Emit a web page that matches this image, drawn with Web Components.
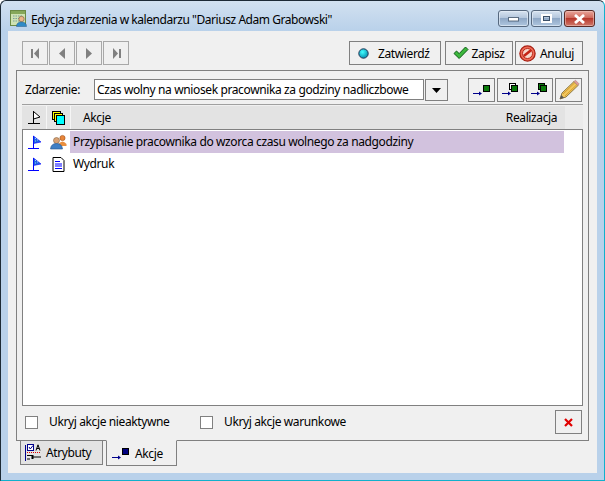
<!DOCTYPE html>
<html><head><meta charset="utf-8"><style>html,body{margin:0;padding:0;background:#fff;}</style></head><body>
<edit-window></edit-window>
<script>
const ICONS={
first:'<svg width="9" height="11" viewBox="0 0 9 11"><rect x="0" y="1" width="2" height="9" fill="#808080"/><path d="M8 0V11L3 5.5Z" fill="#808080"/></svg>',
prev:'<svg width="6" height="11" viewBox="0 0 6 11"><path d="M6 0V11L0 5.5Z" fill="#808080"/></svg>',
next:'<svg width="6" height="11" viewBox="0 0 6 11"><path d="M0 0V11L6 5.5Z" fill="#808080"/></svg>',
last:'<svg width="9" height="11" viewBox="0 0 9 11"><rect x="7" y="1" width="2" height="9" fill="#808080"/><path d="M1 0V11L6 5.5Z" fill="#808080"/></svg>',
dot:'<svg width="11" height="11" viewBox="0 0 11 11"><defs><radialGradient id="d" cx=".4" cy=".35" r=".7"><stop offset="0" stop-color="#4ff"/><stop offset="1" stop-color="#08a"/></radialGradient></defs><circle cx="5.5" cy="5.5" r="4.7" fill="url(#d)" stroke="#235" stroke-width="1"/></svg>',
check:'<svg width="16" height="14" viewBox="0 0 16 14"><path d="M1 7.5L3.5 5L6.2 7.6L12.5 1L15 3.5L6.2 12.5Z" fill="#3db83d" stroke="#0d5c16" stroke-width="1"/></svg>',
stop:'<svg width="17" height="17" viewBox="0 0 17 17"><circle cx="8.5" cy="8.5" r="7.6" fill="#ee6a55" stroke="#a81e12" stroke-width="1.3"/><circle cx="8.5" cy="8.5" r="5" fill="#f7d8cc" stroke="#b92a1c" stroke-width="1"/><path d="M4.8 11L12 5.2" stroke="#c52416" stroke-width="2.6"/></svg>',
pencil:'<svg width="22" height="22" viewBox="0 0 22 22"><path d="M2 20L4 14L16 2.5L20 6.5L8 18Z" fill="#f2c75c" stroke="#8f7a44" stroke-width="1"/><path d="M5 15L17 3.5M7 17L19 5.5" stroke="#d69c2e" stroke-width="1"/><path d="M2 20L3.3 16L6 18.8Z" fill="#555"/><path d="M16 2.5L17.5 1.2L21 4.8L20 6.5Z" fill="#e79a9a" stroke="#a88" stroke-width=".7"/></svg>',
flagK:'<svg width="15" height="15" viewBox="0 0 15 15"><path d="M6.5 1V13M1 13.500H13" stroke="#000" stroke-width="1" fill="none"/><path d="M6.500 1.500L13 7L6.500 9Z" fill="#fff" stroke="#000" stroke-width="1"/></svg>',
flagB:'<svg width="14" height="15" viewBox="0 0 14 15"><path d="M5.5 1V13M0 13.500H11" stroke="#00f" stroke-width="1" fill="none"/><path d="M5.5 1L13 7L5.500 8.500Z" fill="#1c63e0" stroke="#00f" stroke-width=".6"/><path d="M7 3.5h1M9 5h1M7 6h1" stroke="#9cf" stroke-width="1"/></svg>',
layers:'<svg width="13" height="14" viewBox="0 0 13 14"><rect x=".5" y=".5" width="8" height="8" fill="#ff0" stroke="#000"/><rect x="2.5" y="2.5" width="8" height="8" fill="#ff0" stroke="#000"/><rect x="4.5" y="4.5" width="8" height="9" fill="#0ff" stroke="#000"/></svg>',
people:'<svg width="17" height="16" viewBox="0 0 17 16"><circle cx="12.5" cy="4" r="2.6" fill="#e8863a" stroke="#a04f14" stroke-width=".6"/><path d="M8.5 10Q12.5 5 16.5 10V12H8.5Z" fill="#e98f3f"/><circle cx="6.5" cy="6.5" r="3" fill="#d9a172" stroke="#84623f" stroke-width=".6"/><path d="M.5 15Q1 9.5 6.5 9.5T12.5 15Z" fill="#3f7fc4" stroke="#27568c" stroke-width=".6"/></svg>',
doc:'<svg width="13" height="15" viewBox="0 0 13 15"><path d="M1 .5H9L12 3.5V14.5H1Z" fill="#fff" stroke="#000" stroke-width="1"/><path d="M3 4.5H8M3 7H10M3 9H10M3 11.5H10" stroke="#00f" stroke-width="1"/></svg>',
attr:'<svg width="18" height="18" viewBox="0 0 18 18"><rect x="3.5" y=".5" width="6" height="6" fill="#fff" stroke="#00008b"/><path d="M5 3L6.3 5L9 1.5" stroke="#00008b" fill="none"/><path d="M12 6.5L14 .8L16 6.5M12.8 4.5H15.2" stroke="#000" fill="none"/><path d="M3 8.5H17" stroke="#d00" stroke-dasharray="1 1"/><path d="M1.5 1V17" stroke="#00008b"/><path d="M3 11.5H8M3 15H6" stroke="#000"/><path d="M8 13H17" stroke="#000"/><rect x="7.5" y="11" width="2" height="4" fill="#000"/></svg>',
calIcon:'<svg width="17" height="17" viewBox="0 0 17 17"><rect x=".5" y=".5" width="15" height="15" fill="#cfe2b2" stroke="#6b8a45"/><rect x="1" y="1" width="14" height="3" fill="#86a85a"/><path d="M3 6h10M3 8.500h10M3 11h10" stroke="#7a9f9f" stroke-dasharray="1.500 1"/><circle cx="11.500" cy="9" r="2.700" fill="#eab589" stroke="#7a5632" stroke-width=".6"/><path d="M6.500 16.500Q6.500 12 11.500 12T16.500 16.500Z" fill="#2f8ac6" stroke="#2a5a88" stroke-width=".5"/></svg>'
};
const ARROW='<path d="M0 10.500H7" stroke="#00008b" fill="none"/><path d="M6 8.500L9 10.500L6 12.500Z" fill="#00008b"/>';
const sq=(fill,back,backFill)=>`<svg width="18" height="14" viewBox="0 0 18 14">${ARROW}${back?`<rect x="7.500" y=".5" width="6" height="6" fill="${backFill}" stroke="#000"/>`:''}<rect x="${back?9.5:10.5}" y="2.500" width="6" height="6" fill="${fill}" stroke="#000"/></svg>`;
function el(name,html){customElements.define(name,class extends HTMLElement{constructor(){super();this.attachShadow({mode:'open'}).innerHTML=html;}});}
el('ui-btn',`<style>:host{display:inline-flex;box-sizing:border-box;height:24px;border:1px solid #808080;align-items:center;justify-content:center;background:#f0f0f0;color:#000;flex:none}:host([dim]){border-color:#a8a8a8}</style><slot></slot>`);
el('title-bar',`<style>:host{display:flex;height:30px;box-sizing:border-box;padding:9px 9px 0 9px;gap:4px;font-size:12px;letter-spacing:-.45px;color:#000}
.t{flex:1;line-height:20px}.ctl{display:flex;gap:2px;height:17px}
.c{width:31px;height:17px;box-sizing:border-box;border:1px solid #56687e;border-radius:3px;background:linear-gradient(#d7e3f0,#b4c7dd 45%,#8fa8c6 50%,#aec6df);display:flex;align-items:center;justify-content:center;box-shadow:inset 0 0 0 1px #e6eef7aa}
.x{background:linear-gradient(#e9a59a,#cf6a5d 45%,#b8382c 50%,#d0796b);border-color:#5a2a25;box-shadow:inset 0 0 0 1px #efc4bc99}</style>
<span style="display:flex">${ICONS.calIcon}</span><span class="t"><slot></slot></span>
<div class="ctl"><div class="c"><svg width="11" height="6"><rect x=".5" y="1.500" width="10" height="3.500" fill="#fff" stroke="#3c5068" stroke-opacity=".8"/></svg></div><div class="c"><svg width="11" height="9"><rect x="1" y="1" width="9" height="7" fill="none" stroke="#fff" stroke-width="2"/><rect x="2.500" y="2.500" width="6" height="4" fill="none" stroke="#3c5068"/></svg></div><div class="c x"><svg width="13" height="10"><path d="M2 1L11 9M11 1L2 9" stroke="#fff" stroke-width="2.800"/></svg></div></div>`);
el('nav-bar',`<style>:host{display:flex;height:24px;margin:10px 14px 0 14px;gap:1px}.s{flex:1}
ui-btn.n{width:26px}</style>
<ui-btn dim class="n">${ICONS.first}</ui-btn><ui-btn dim class="n">${ICONS.prev}</ui-btn><ui-btn dim class="n">${ICONS.next}</ui-btn><ui-btn dim class="n">${ICONS.last}</ui-btn><span class="s"></span>
<ui-btn style="width:92px;gap:9px;margin-right:3px;justify-content:flex-start;padding-left:8px;box-sizing:border-box">${ICONS.dot}<span>Zatwierdź</span></ui-btn><ui-btn style="width:68px;gap:2px;margin-right:1px">${ICONS.check}<span>Zapisz</span></ui-btn><ui-btn style="width:68px;gap:4px;padding-right:5px">${ICONS.stop}<span>Anuluj</span></ui-btn>`);
el('event-row',`<style>:host{display:flex;align-items:flex-start;height:24px;margin:7px 6px 0 8px}
.l{width:69px;line-height:21px;margin-top:1px}.in{width:330px;height:21px;margin-top:1px;box-sizing:border-box;border:1px solid #808080;background:#fff;display:flex;align-items:center;padding:0 0 1px 2px;white-space:nowrap}
ui-btn{width:27px;margin-left:2px}ui-btn.dd{width:23px;height:22px;margin:1px 20px 0 1px}ui-btn.f{margin-left:0}</style>
<span class="l">Zdarzenie:</span><div class="in">Czas wolny na wniosek pracownika za godziny nadliczbowe</div>
<ui-btn class="dd"><svg width="9" height="5"><path d="M0 0H9L4.500 5Z" fill="#000"/></svg></ui-btn>
<ui-btn class="f">${sq('#0a7a0a')}</ui-btn><ui-btn>${sq('#0a7a0a',true,'#fff')}</ui-btn><ui-btn>${sq('#0a7a0a',true,'#0a7a0a')}</ui-btn><ui-btn>${ICONS.pencil}</ui-btn>`);
el('action-grid',`<style>:host{display:flex;flex-direction:column;margin:2px 5px 0 5px;flex:1;min-height:0}
.h{display:grid;grid-template-columns:25px 24px 424px 70px 1fr;height:25px;border-top:1px solid #a0a0a0;padding-top:1px;box-sizing:border-box}
.h>div{background:#e3e3e3;display:flex;align-items:center;justify-content:center;border-right:1px solid #f5f5f5;box-sizing:border-box}
.h .a{justify-content:flex-start;padding-left:12px;border-right:none}
.h .r{border-right:none;padding-left:3px}
.h .e{background:#ebebeb;border-right:none}
.b{flex:1;background:#fff;border:1px solid #808080;padding-top:1px;display:flex;flex-direction:column;min-height:0}</style>
<div class="h"><div>${ICONS.flagK}</div><div>${ICONS.layers}</div><div class="a">Akcje</div><div class="r">Realizacja</div><div class="e"></div></div>
<div class="b"><slot></slot></div>`);
el('action-row',`<style>:host{display:flex;align-items:center;height:22px;flex:none}
.i{display:flex;width:24px;justify-content:center}.i2{width:23px}.t{flex:none;width:494px;height:22px;display:flex;align-items:center;padding:0 0 2px 3px;box-sizing:border-box}
:host([selected]) .t{background:#d2c2de}</style>
<div class="i">${ICONS.flagB}</div><div class="i i2"><slot name="icon"></slot></div><div class="t"><slot></slot></div>`);
el('foot-row',`<style>:host{display:flex;align-items:flex-start;height:34px;margin:0 6px 0 8px;padding-top:4px;box-sizing:border-box}
.c{width:13px;height:13px;box-sizing:border-box;border:1px solid #808080;background:#fff;margin:6px 11px 0 0;flex:none}
span{line-height:24px}.s{flex:1}</style>
<span class="c"></span><span style="width:151px">Ukryj akcje nieaktywne</span><span class="c"></span><span>Ukryj akcje warunkowe</span><span class="s"></span>
<ui-btn style="width:27px"><svg width="9" height="9" viewBox="0 0 9 9"><path d="M1 1L8 8M8 1L1 8" stroke="#e00000" stroke-width="2.200"/></svg></ui-btn>`);
el('tab-strip',`<style>:host{display:flex;height:26px;padding-left:12px;align-items:flex-start;margin-top:-1px;position:relative}
.t{display:flex;align-items:center;box-sizing:border-box;border:1px solid #808080}
.a{width:83px;height:25px;background:#e3e3e3;padding-left:3px;gap:4px}.b{width:71px;height:26px;margin-left:3px;background:#f0f0f0;gap:4px;padding-left:5px;border-top:1px solid #f0f0f0}</style>
<div class="t a">${ICONS.attr}<span>Atrybuty</span></div><div class="t b"><svg width="19" height="14" viewBox="0 0 19 14"><path d="M0 11.500H7" stroke="#00008b"/><path d="M6 9.500L9 11.500L6 13.500Z" fill="#00008b"/><rect x="10.500" y="2.500" width="6" height="6" fill="#00007f" stroke="#000"/></svg><span>Akcje</span></div>`);
el('edit-window',`<style>:host{display:flex;flex-direction:column;width:605px;height:481px;box-sizing:border-box;border:1px solid #1d2a35;border-right-color:#12b0cc;border-bottom-color:#12b0cc;border-radius:6px 6px 0 0;background:linear-gradient(#d2e1f0,#b9d1ea 30px);background-color:#b9d1ea;font:12px "Noto Sans",sans-serif;letter-spacing:-.38px;padding:0 7px 7px 7px;overflow:hidden}
title-bar{margin:0 -7px}
.body{flex:1;background:#f0f0f0;display:flex;flex-direction:column;min-height:0}
.panel{height:371px;flex:none;box-sizing:border-box;display:flex;flex-direction:column;margin:5px 8px 0 8px;border:1px solid #808080}</style>
<title-bar>Edycja zdarzenia w kalendarzu "Dariusz Adam Grabowski"</title-bar>
<div class="body"><nav-bar></nav-bar>
<div class="panel"><event-row></event-row>
<action-grid><action-row selected><span slot="icon" style="display:flex">${ICONS.people}</span>Przypisanie pracownika do wzorca czasu wolnego za nadgodziny</action-row><action-row><span slot="icon" style="display:flex">${ICONS.doc}</span>Wydruk</action-row></action-grid>
<foot-row></foot-row></div>
<tab-strip></tab-strip></div>`);
</script></body></html>
